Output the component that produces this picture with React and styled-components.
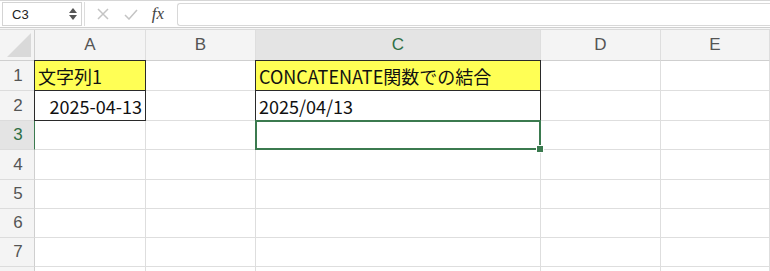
import React from "react";
import styled, { createGlobalStyle } from "styled-components";

const Global = createGlobalStyle`
  html, body { margin: 0; padding: 0; background: #fff; }
  body { font-family: "Liberation Sans", "Noto Sans CJK JP", Arial, sans-serif; overflow: hidden; }
`;

const Page = styled.div`
  width: 770px;
  height: 271px;
  overflow: hidden;
  display: flex;
  flex-direction: column;
  & > * { flex-shrink: 0; }
`;

const Toolbar = styled.div`
  height: 28px;
  border-top: 1px solid #d6d6d6;
  border-bottom: 1px solid #cfcfcf;
  display: flex;
  align-items: center;
  box-sizing: border-box;
  padding-left: 2px;
  background: #fff;
`;

const NameBox = styled.div`
  width: 80px;
  height: 24px;
  box-sizing: border-box;
  border: 1px solid #d4d4d4;
  display: flex;
  align-items: center;
  justify-content: space-between;
  padding: 0 4px 0 9px;
  font-size: 13px;
  color: #222;
`;

const Spin = styled.div`
  display: flex;
  flex-direction: column;
  gap: 2px;
  align-items: center;
`;

const Sep = styled.div`
  width: 1px;
  height: 24px;
  background: #dcdcdc;
  margin-left: 2px;
`;

const IconBtn = styled.div`
  width: ${(p) => p.$w}px;
  display: flex;
  justify-content: center;
  align-items: center;
`;

const Fx = styled.div`
  width: 34px;
  text-align: center;
  font-family: "Liberation Serif", serif;
  font-style: italic;
  font-size: 17px;
  color: #444;
`;

const Formula = styled.div`
  flex: 1;
  height: 21px;
  margin-left: 2px;
  border: 1px solid #d8d8d8;
  border-right: none;
  border-radius: 3px 0 0 3px;
`;

const Gap = styled.div`
  height: 1px;
  border-bottom: 1px solid #dadada;
  background: #f6f6f6;
`;

const Grid = styled.div`
  display: grid;
  grid-template-columns: 35px 111px 110px 285px 120px 109px;
`;

const ColHead = styled.div`
  height: 31px;
  box-sizing: border-box;
  background: ${(p) => (p.$active ? "#e4e4e4" : "#f4f4f4")};
  border-right: 1px solid #dedede;
  border-bottom: 1px solid ${(p) => (p.$active ? "#3b7a4f" : "#cfcfcf")};
  display: flex;
  align-items: center;
  justify-content: center;
  font-size: 17px;
  color: ${(p) => (p.$active ? "#2f6f45" : "#555")};
`;

const Corner = styled.div`
  height: 31px;
  box-sizing: border-box;
  background: #f4f4f4;
  border-right: 1px solid #cfcfcf;
  border-bottom: 1px solid #cfcfcf;
  position: relative;
  &::after {
    content: "";
    position: absolute;
    right: 3px;
    bottom: 3px;
    width: 0;
    height: 0;
    border-left: 24px solid transparent;
    border-bottom: 24px solid #d9d9d9;
  }
`;

const RowHead = styled.div`
  height: ${(p) => p.$h}px;
  box-sizing: border-box;
  background: ${(p) => (p.$active ? "#e4e4e4" : "#f4f4f4")};
  border-right: 1px solid ${(p) => (p.$active ? "#3b7a4f" : "#cfcfcf")};
  border-bottom: 1px solid #dcdcdc;
  display: flex;
  align-items: center;
  justify-content: center;
  padding-left: 2px;
  font-size: 17px;
  color: ${(p) => (p.$active ? "#2f6f45" : "#555")};
`;

const Cell = styled.div`
  height: ${(p) => p.$h}px;
  box-sizing: border-box;
  border-right: 1px solid #dedede;
  border-bottom: 1px solid #dedede;
  background: ${(p) => (p.$fill ? "#ffff55" : "#fff")};
  display: flex;
  align-items: center;
  justify-content: ${(p) => (p.$right ? "flex-end" : "flex-start")};
  padding: 0 3px 0 3px;
  font-family: "Noto Sans CJK JP", "Liberation Sans", sans-serif;
  font-size: 18px;
  color: #111;
  white-space: nowrap;
  position: relative;
  ${(p) =>
    p.$box &&
    `
    &::before {
      content: "";
      position: absolute;
      left: -1px; top: -1px; right: -1px; bottom: -1px;
      border: 1px solid #2a2a2a;
      pointer-events: none;
    }
  `}
  ${(p) =>
    p.$sel &&
    `
    &::before {
      content: "";
      position: absolute;
      left: -1px; top: -1px; right: -1px; bottom: -1px;
      border: 2px solid #3b7a4f;
      pointer-events: none;
    }
    &::after {
      content: "";
      position: absolute;
      right: -4px; bottom: -4px;
      width: 6px; height: 6px;
      background: #3b7a4f;
      border: 1px solid #fff;
      z-index: 2;
    }
  `}
`;

const heights = [30, 30, 29, 30, 29, 29, 29, 10];

const data = {
  "0-0": { text: "文字列1", fill: true, box: true },
  "0-2": { text: "CONCATENATE関数での結合", fill: true, box: true },
  "1-0": { text: "2025-04-13", right: true, box: true },
  "1-2": { text: "2025/04/13", box: true },
  "2-2": { sel: true },
};

export default function App() {
  const cols = ["A", "B", "C", "D", "E"];
  return (
    <Page>
      <Global />
      <Toolbar>
        <NameBox>
          <span>C3</span>
          <Spin>
            <svg width="8" height="5" viewBox="0 0 8 5"><path d="M4 0 L8 5 L0 5 Z" fill="#555" /></svg>
            <svg width="8" height="5" viewBox="0 0 8 5"><path d="M0 0 L8 0 L4 5 Z" fill="#555" /></svg>
          </Spin>
        </NameBox>
        <Sep />
        <IconBtn $w={36}>
          <svg width="12" height="12" viewBox="0 0 12 12"><path d="M1 1 L11 11 M11 1 L1 11" stroke="#c4c4c4" strokeWidth="1.5" /></svg>
        </IconBtn>
        <IconBtn $w={20}>
          <svg width="14" height="11" viewBox="0 0 14 11"><path d="M1 6 L5 10 L13 1" stroke="#c4c4c4" strokeWidth="1.5" fill="none" /></svg>
        </IconBtn>
        <Fx>fx</Fx>
        <Formula />
      </Toolbar>
      <Gap />
      <Grid>
        <Corner />
        {cols.map((c) => (
          <ColHead key={c} $active={c === "C"}>{c}</ColHead>
        ))}
        {heights.map((h, r) => (
          <React.Fragment key={r}>
            <RowHead $h={h} $active={r === 2}>{r < 7 ? r + 1 : ""}</RowHead>
            {cols.map((c, ci) => {
              const d = data[`${r}-${ci}`] || {};
              return (
                <Cell key={c} $h={h} $fill={d.fill} $box={d.box} $sel={d.sel} $right={d.right}>
                  {d.text}
                </Cell>
              );
            })}
          </React.Fragment>
        ))}
      </Grid>
    </Page>
  );
}
